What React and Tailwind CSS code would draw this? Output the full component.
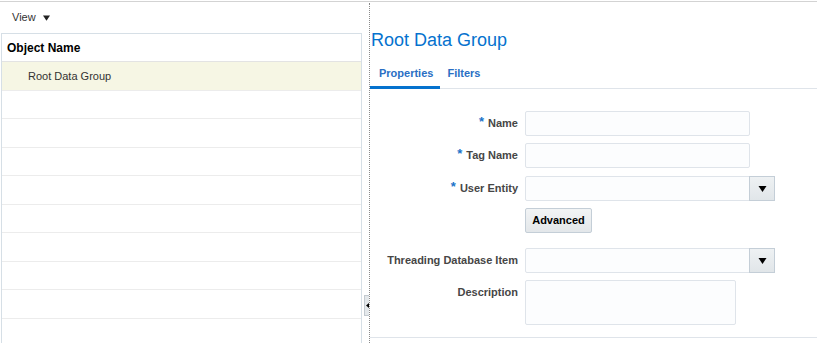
import { useState } from "react";

const EMPTY_ROWS = 9;

function Caret({ className = "" }) {
  return (
    <svg viewBox="0 0 8 6" className={className} aria-hidden="true">
      <path d="M0 0h8L4 6z" fill="currentColor" />
    </svg>
  );
}

function Label({ children, required }) {
  return (
    <div className="flex h-[25px] w-[155px] shrink-0 items-center justify-end pr-[7px] text-[11px] font-bold text-[#464646]">
      {required && <span className="mr-[4px] -mt-[3px] text-[13px] font-bold text-[#1b73c9]">*</span>}
      {children}
    </div>
  );
}

function TextInput({ width = "w-[225px]" }) {
  return <div className={`h-[25px] ${width} rounded-[2px] border border-[#dfe4ea] bg-[#fcfdfe]`} />;
}

function Select() {
  return (
    <div className="flex h-[25px] w-[250px]">
      <div className="h-full w-[225px] rounded-l-[2px] border border-[#dfe4ea] bg-[#fcfdfe]" />
      <div className="-ml-px flex h-full w-[26px] items-center justify-center border border-[#c4ced7] bg-gradient-to-b from-[#eef1f3] to-[#e1e6e9] text-black">
        <Caret className="h-[6px] w-[9px]" />
      </div>
    </div>
  );
}

export default function App() {
  const [tab, setTab] = useState("properties");

  return (
    <div className="h-[343px] w-[817px] overflow-hidden bg-white font-['Liberation_Sans',Arial,sans-serif]">
      <div className="mt-px border-t border-[#d3d3d3]" />
      <div className="flex h-[341px]">
        {/* left: object tree */}
        <div className="flex w-[362px] shrink-0 flex-col">
          <div className="flex h-[31px] shrink-0 items-center pl-[12px] text-[11px] text-[#333]">
            View
            <Caret className="ml-[7px] h-[6px] w-[7px] text-[#222]" />
          </div>
          <div className="ml-px min-h-0 flex-1 overflow-hidden border border-b-0 border-[#d6dfe6]">
            <div className="flex h-[28px] items-center border-b border-[#e3e3e3] pl-[5px] text-[12px] font-bold text-black">
              Object Name
            </div>
            <div className="flex h-[28.5px] items-center border-b border-[#ececec] bg-[#f6f6e4] pl-[26px] text-[11px] text-[#333]">
              Root Data Group
            </div>
            {Array.from({ length: EMPTY_ROWS }).map((_, i) => (
              <div key={i} className="h-[28.5px] border-b border-[#ececec]" />
            ))}
          </div>
        </div>

        {/* splitter */}
        <div className="relative w-[8px] shrink-0">
          <div className="absolute bottom-0 left-[7px] top-[1px] border-l border-dotted border-[#8a8a8a]" />
          <div className="absolute left-[2px] top-[293px] flex h-[21px] w-[5px] items-center justify-center border border-r-0 border-[#c3cad0] bg-[#e4e8eb]">
            <svg viewBox="0 0 3 5" className="h-[5px] w-[3px]" aria-hidden="true">
              <path d="M3 0v5L0 2.5z" fill="#000" />
            </svg>
          </div>
        </div>

        {/* right: detail */}
        <div className="flex flex-1 flex-col">
          <div className="h-[336px] border-b border-[#dfe4ea]">
            <h1 className="pl-px pt-[27px] text-[18px] leading-[22px] text-[#0572ce]">Root Data Group</h1>
            <div className="mt-[9px] flex border-b border-[#dfe4ea]">
              {[
                { id: "properties", label: "Properties", cls: "pl-[9px] pr-[7px]" },
                { id: "filters", label: "Filters", cls: "pl-[7px] pr-[8px]" },
              ].map((t) => (
                <button
                  key={t.id}
                  type="button"
                  onClick={() => setTab(t.id)}
                  className={`-mb-px flex h-[29px] items-center border-b-[3px] pt-[1px] text-[11px] font-bold text-[#2a6fc4] ${t.cls} ${
                    tab === t.id ? "border-[#0572ce]" : "border-transparent"
                  }`}
                >
                  {t.label}
                </button>
              ))}
            </div>

            <div className="mt-[22px] flex flex-col">
              <div className="flex">
                <Label required>Name</Label>
                <TextInput />
              </div>
              <div className="mt-[7px] flex">
                <Label required>Tag Name</Label>
                <TextInput />
              </div>
              <div className="mt-[8px] flex">
                <Label required>User Entity</Label>
                <Select />
              </div>
              <div className="mt-[7px] flex">
                <div className="w-[155px] shrink-0" />
                <button
                  type="button"
                  className="h-[25px] w-[67px] rounded-[2px] border border-[#c4ced7] bg-gradient-to-b from-[#f2f4f5] to-[#e3e7ea] text-[11px] font-bold text-black"
                >
                  Advanced
                </button>
              </div>
              <div className="mt-[15px] flex">
                <Label>Threading Database Item</Label>
                <Select />
              </div>
              <div className="mt-[7px] flex">
                <Label>Description</Label>
                <div className="h-[45px] w-[211px] rounded-[2px] border border-[#dfe4ea] bg-[#fcfdfe]" />
              </div>
            </div>
          </div>
        </div>
      </div>
    </div>
  );
}
